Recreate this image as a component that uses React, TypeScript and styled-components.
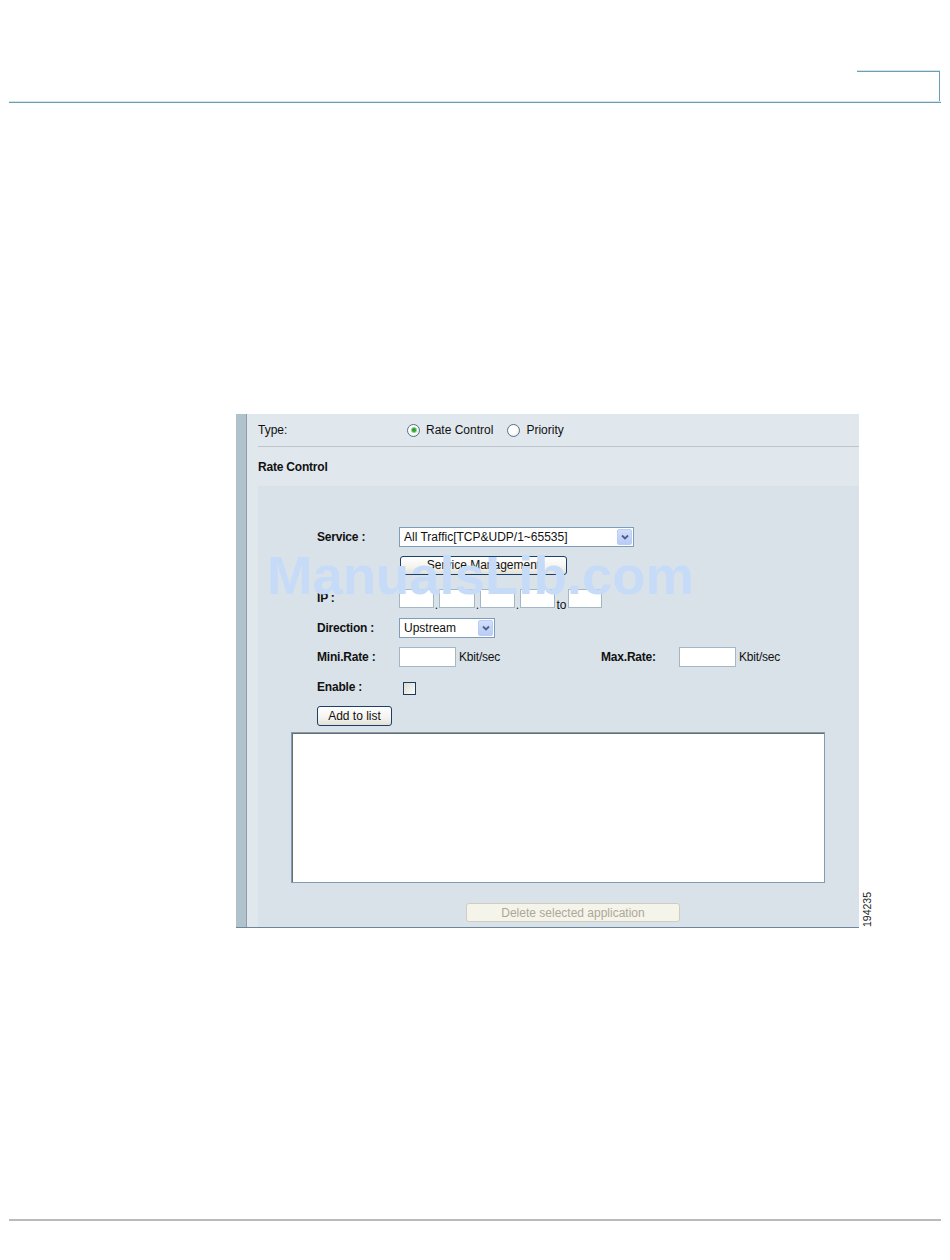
import styled, { createGlobalStyle } from "styled-components"

const GlobalStyle = createGlobalStyle`
  html, body {
    margin: 0;
    padding: 0;
    background: #fff;
  }
  body {
    font-family: "Liberation Sans", Arial, sans-serif;
    font-size: 12px;
    color: #111;
  }
`

const Page = styled.div`
  width: 950px;
  height: 1260px;
  box-sizing: border-box;
  padding: 0 9px;
  display: flex;
  flex-direction: column;
`

const Header = styled.header`
  height: 103px;
  display: flex;
  flex-direction: column;
  justify-content: flex-end;
`

const HeaderTab = styled.div`
  align-self: flex-end;
  width: 82px;
  height: 29px;
  margin-right: 1px;
  border-top: 1px solid #6a9fb3;
  border-right: 1px solid #6a9fb3;
  box-shadow: 0 -1px 0 #d3e4ea;
`

const HeaderRule = styled.div`
  border-top: 1px solid #d3e4ea;
  border-bottom: 1px solid #6a9fb3;
`

const Main = styled.main`
  flex: 1;
  padding: 311px 0 0 227px;
`

const Footer = styled.footer`
  height: 39px;
  border-top: 2px solid #bababa;
`

const Figure = styled.div`
  display: flex;
  align-items: flex-end;
`

const FigureNumber = styled.span`
  margin-left: 3px;
  margin-bottom: 1px;
  writing-mode: vertical-rl;
  transform: rotate(180deg);
  font-size: 10.5px;
  line-height: 10px;
  color: #222;
`

const Panel = styled.div`
  position: relative;
  width: 623px;
  height: 514px;
  flex-shrink: 0;
  box-sizing: border-box;
  display: flex;
  border-bottom: 1px solid #6d8596;
  overflow: hidden;
`

const Strip = styled.div`
  width: 11px;
  flex-shrink: 0;
  box-sizing: border-box;
  background: #b0c3cd;
  border-right: 1px solid #8c9fa9;
`

const PanelBody = styled.div`
  flex: 1;
  min-width: 0;
  display: flex;
  flex-direction: column;
  padding-left: 11px;
  background: #e0e7ed;
`

const TypeRow = styled.div`
  height: 32px;
  display: flex;
  align-items: center;
  border-bottom: 1px solid #bcc5cb;
`

const TypeLabel = styled.span`
  width: 149px;
`

const RadioOption = styled.label`
  display: flex;
  align-items: center;
  gap: 6px;
  margin-right: 14px;
`

const RadioDot = styled.span<{ $checked?: boolean }>`
  width: 11px;
  height: 11px;
  border-radius: 50%;
  border: 1px solid #56708c;
  background: radial-gradient(circle at 35% 35%, #fff 40%, #e4e4dc 100%);
  display: flex;
  align-items: center;
  justify-content: center;

  &::after {
    content: "";
    display: ${(p) => (p.$checked ? "block" : "none")};
    width: 4px;
    height: 4px;
    border-radius: 50%;
    background: #2da12d;
    box-shadow: 0 0 0 1px #8fd18f;
  }
`

const SectionTitle = styled.div`
  height: 39px;
  display: flex;
  align-items: center;
  font-weight: bold;
  letter-spacing: -0.2px;
`

const Content = styled.div`
  flex: 1;
  background: #d9e2e9;
  padding: 38px 34px 0 33px;
`

const Form = styled.div`
  padding-left: 26px;
`

const Row = styled.div<{ $gap?: number }>`
  height: 26px;
  margin-top: ${(p) => p.$gap ?? 0}px;
  display: flex;
  align-items: center;
`

const FieldLabel = styled.span<{ $width?: number }>`
  width: ${(p) => p.$width ?? 82}px;
  flex-shrink: 0;
  font-weight: bold;
  letter-spacing: -0.2px;
`

const SelectBox = styled.div<{ $width: number }>`
  width: ${(p) => p.$width}px;
  height: 20px;
  box-sizing: border-box;
  border: 1px solid #7f9db9;
  background: #fff;
  display: flex;
  align-items: center;
  padding-left: 4px;
`

const SelectText = styled.span`
  flex: 1;
  white-space: nowrap;
`

const SelectArrow = styled.span`
  width: 15px;
  height: 16px;
  margin-right: 1px;
  box-sizing: border-box;
  border: 1px solid #bccdf5;
  border-radius: 2px;
  background: linear-gradient(#d2defc, #b9cbf6);
  display: flex;
  align-items: center;
  justify-content: center;
`

const Button = styled.button<{ $width: number; $height?: number }>`
  width: ${(p) => p.$width}px;
  height: ${(p) => p.$height ?? 20}px;
  flex-shrink: 0;
  padding: 0;
  border: 1px solid #1d3f6b;
  border-radius: 3px;
  background: linear-gradient(#ffffff, #f4f3ee 60%, #e3e1d6);
  font-family: inherit;
  font-size: 12px;
  color: #111;
  line-height: 1;

  &:disabled {
    border-color: #cfcdbf;
    background: #f5f4ea;
    color: #aca899;
  }
`

const TextInput = styled.input<{ $width: number; $height?: number }>`
  width: ${(p) => p.$width}px;
  height: ${(p) => p.$height ?? 19}px;
  flex-shrink: 0;
  box-sizing: border-box;
  margin: 0;
  border: 1px solid #a4b7c7;
  background: #fff;
  padding: 0 2px;
  font-family: inherit;
  font-size: 12px;
`

const IpGroup = styled.div`
  display: flex;
  align-items: flex-end;
  height: 19px;
`

const IpSep = styled.span<{ $width: number }>`
  width: ${(p) => p.$width}px;
  text-align: center;
  line-height: 10px;
  margin-bottom: -2px;
`

const RateCell = styled.div`
  width: 202px;
  flex-shrink: 0;
  display: flex;
  align-items: center;
  gap: 3px;
`

const Unit = styled.span`
  letter-spacing: -0.2px;
`

const CheckBox = styled.span`
  width: 13px;
  height: 13px;
  box-sizing: border-box;
  margin-left: 4px;
  margin-top: 2px;
  border: 1px solid #1c3a5a;
  background: linear-gradient(135deg, #dcdcd5, #fbfbf9);
`

const ListBox = styled.div`
  margin-top: 3px;
  width: 534px;
  height: 151px;
  box-sizing: border-box;
  border: 1px solid #7f9db9;
  background: #fff;
  box-shadow: inset 1px 1px 0 #6f6c63;
`

const DeleteRow = styled.div`
  margin-top: 20px;
  padding-left: 175px;
`

const Watermark = styled.div`
  position: absolute;
  left: 31px;
  top: 135px;
  font-size: 54.5px;
  line-height: 1;
  font-weight: bold;
  color: #c6dbf7;
  white-space: nowrap;
  pointer-events: none;
`

const Chevron = () => (
  <svg width="8" height="6" viewBox="0 0 8 6">
    <path d="M1 1.5 L4 4.5 L7 1.5" fill="none" stroke="#4d6185" strokeWidth="1.8" />
  </svg>
)

const App = () => {
  return (
    <>
      <GlobalStyle />
      <Page>
        <Header>
          <HeaderTab />
          <HeaderRule />
        </Header>

        <Main>
          <Figure>
            <Panel>
              <Strip />
              <PanelBody>
                <TypeRow>
                  <TypeLabel>Type:</TypeLabel>
                  <RadioOption>
                    <RadioDot $checked />
                    Rate Control
                  </RadioOption>
                  <RadioOption>
                    <RadioDot />
                    Priority
                  </RadioOption>
                </TypeRow>

                <SectionTitle>Rate Control</SectionTitle>

                <Content>
                  <Form>
                    <Row>
                      <FieldLabel>Service :</FieldLabel>
                      <SelectBox $width={235}>
                        <SelectText>All Traffic[TCP&amp;UDP/1~65535]</SelectText>
                        <SelectArrow>
                          <Chevron />
                        </SelectArrow>
                      </SelectBox>
                    </Row>

                    <Row $gap={2}>
                      <FieldLabel />
                      <Button $width={167} $height={19} style={{ marginLeft: 1 }}>
                        Service Management
                      </Button>
                    </Row>

                    <Row $gap={7}>
                      <FieldLabel>IP :</FieldLabel>
                      <IpGroup>
                        <TextInput $width={35} />
                        <IpSep $width={5}>.</IpSep>
                        <TextInput $width={36} />
                        <IpSep $width={5}>.</IpSep>
                        <TextInput $width={35} />
                        <IpSep $width={5}>.</IpSep>
                        <TextInput $width={35} />
                        <IpSep $width={13}>to</IpSep>
                        <TextInput $width={34} />
                      </IpGroup>
                    </Row>

                    <Row $gap={4}>
                      <FieldLabel>Direction :</FieldLabel>
                      <SelectBox $width={96}>
                        <SelectText>Upstream</SelectText>
                        <SelectArrow>
                          <Chevron />
                        </SelectArrow>
                      </SelectBox>
                    </Row>

                    <Row $gap={3}>
                      <FieldLabel>Mini.Rate :</FieldLabel>
                      <RateCell>
                        <TextInput $width={57} $height={20} />
                        <Unit>Kbit/sec</Unit>
                      </RateCell>
                      <FieldLabel $width={78}>Max.Rate:</FieldLabel>
                      <RateCell>
                        <TextInput $width={57} $height={20} />
                        <Unit>Kbit/sec</Unit>
                      </RateCell>
                    </Row>

                    <Row $gap={4}>
                      <FieldLabel>Enable :</FieldLabel>
                      <CheckBox />
                    </Row>

                    <Row $gap={3}>
                      <Button $width={75}>Add to list</Button>
                    </Row>
                  </Form>

                  <ListBox />

                  <DeleteRow>
                    <Button $width={214} $height={19} disabled>
                      Delete selected application
                    </Button>
                  </DeleteRow>
                </Content>
              </PanelBody>
              <Watermark>ManualsLib.com</Watermark>
            </Panel>
            <FigureNumber>194235</FigureNumber>
          </Figure>
        </Main>

        <Footer />
      </Page>
    </>
  )
}

export default App
